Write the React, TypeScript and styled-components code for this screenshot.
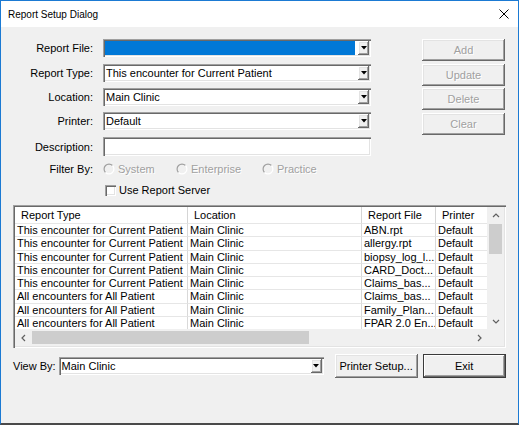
import styled, { createGlobalStyle } from "styled-components";

const ROWS = [
  ["This encounter for Current Patient", "Main Clinic", "ABN.rpt", "Default"],
  ["This encounter for Current Patient", "Main Clinic", "allergy.rpt", "Default"],
  ["This encounter for Current Patient", "Main Clinic", "biopsy_log_l...", "Default"],
  ["This encounter for Current Patient", "Main Clinic", "CARD_Doct...", "Default"],
  ["This encounter for Current Patient", "Main Clinic", "Claims_bas...", "Default"],
  ["All encounters for All Patient", "Main Clinic", "Claims_bas...", "Default"],
  ["All encounters for All Patient", "Main Clinic", "Family_Plan...", "Default"],
  ["All encounters for All Patient", "Main Clinic", "FPAR 2.0 En...", "Default"],
];

const COLUMNS = ["Report Type", "Location", "Report File", "Printer"];

const DropArrow = () => (
  <svg width="6" height="4" viewBox="0 0 6 4">
    <polygon points="0,0 6,0 3,3.5" fill="#000" />
  </svg>
);

const Chevron = ({ dir }: { dir: "up" | "down" | "left" | "right" }) => {
  const points = {
    up: "1,5 4,2 7,5",
    down: "1,3 4,6 7,3",
    left: "5,1 2,4 5,7",
    right: "3,1 6,4 3,7",
  }[dir];
  return (
    <svg width="8" height="8" viewBox="0 0 8 8">
      <polyline points={points} fill="none" stroke="#606060" strokeWidth="1.2" />
    </svg>
  );
};

const Radio = () => (
  <svg width="12" height="12" viewBox="0 0 12 12">
    <circle cx="6" cy="6" r="4.9" fill="#f0f0f0" />
    <path d="M9.5 2.5 A4.95 4.95 0 0 0 2.5 9.5" fill="none" stroke="#a0a0a0" strokeWidth="1.2" />
    <path d="M2.5 9.5 A4.95 4.95 0 0 0 9.5 2.5" fill="none" stroke="#ffffff" strokeWidth="1.2" />
  </svg>
);

const Combo = ({ value, selected, width }: { value?: string; selected?: boolean; width?: number }) => (
  <Field $w={width}>
    <ComboValue $selected={selected}>{value}</ComboValue>
    <DropButton>
      <DropArrow />
    </DropButton>
  </Field>
);

const App = () => {
  return (
    <Window>
      <GlobalStyle />
      <TitleBar>
        <Title>Report Setup Dialog</Title>
        <CloseBox>
          <svg width="10" height="10" viewBox="0 0 10 10">
            <path d="M0.5 0.5 L9.5 9.5 M9.5 0.5 L0.5 9.5" stroke="#000" strokeWidth="1" />
          </svg>
        </CloseBox>
      </TitleBar>

      <Body>
        <TopArea>
          <Form>
            <FormRow $h={25}>
              <Label>Report File:</Label>
              <Combo selected />
            </FormRow>
            <FormRow $h={24}>
              <Label>Report Type:</Label>
              <Combo value="This encounter for Current Patient" />
            </FormRow>
            <FormRow $h={24}>
              <Label>Location:</Label>
              <Combo value="Main Clinic" />
            </FormRow>
            <FormRow $h={25}>
              <Label>Printer:</Label>
              <Combo value="Default" />
            </FormRow>
            <FormRow $h={23}>
              <Label $h={19}>Description:</Label>
              <TextInput />
            </FormRow>
            <FormRow $h={20}>
              <Label>Filter By:</Label>
              <Options>
                <Option $w={73}>
                  <Radio />
                  System
                </Option>
                <Option $w={86}>
                  <Radio />
                  Enterprise
                </Option>
                <Option>
                  <Radio />
                  Practice
                </Option>
              </Options>
            </FormRow>
            <FormRow $h={21}>
              <Label />
              <CheckLine>
                <CheckBox />
                Use Report Server
              </CheckLine>
            </FormRow>
          </Form>

          <ButtonColumn>
            <DialogButton disabled>Add</DialogButton>
            <DialogButton disabled>Update</DialogButton>
            <DialogButton disabled>Delete</DialogButton>
            <DialogButton disabled>Clear</DialogButton>
          </ButtonColumn>
        </TopArea>

        <ListFrame>
          <ListViewport>
            <HeaderRow>
              {COLUMNS.map((c) => (
                <HeaderCell key={c}>{c}</HeaderCell>
              ))}
            </HeaderRow>
            {ROWS.map((row, i) => (
              <DataRow key={i}>
                {row.map((cell, j) => (
                  <DataCell key={j}>{cell}</DataCell>
                ))}
              </DataRow>
            ))}
          </ListViewport>

          <VScroll>
            <ScrollArrow>
              <Chevron dir="up" />
            </ScrollArrow>
            <VThumb />
            <ScrollTrack />
            <ScrollArrow>
              <Chevron dir="down" />
            </ScrollArrow>
          </VScroll>

          <HScroll>
            <ScrollArrow>
              <Chevron dir="left" />
            </ScrollArrow>
            <HThumb />
            <ScrollTrack />
            <ScrollArrow>
              <Chevron dir="right" />
            </ScrollArrow>
          </HScroll>
          <Corner />
        </ListFrame>

        <BottomBar>
          <BottomLabel>View By:</BottomLabel>
          <Combo value="Main Clinic" width={265} />
          <DialogButton $h={24} $gap={11}>
            Printer Setup...
          </DialogButton>
          <DialogButton $h={24} $gap={5} $default>
            Exit
          </DialogButton>
        </BottomBar>
      </Body>
    </Window>
  );
};

export default App;

const GlobalStyle = createGlobalStyle`
  html, body {
    margin: 0;
    padding: 0;
    background: #ffffff;
  }
  body {
    font-family: "Liberation Sans", Arial, sans-serif;
    font-size: 11px;
    color: #000;
  }
`;

const Window = styled.div`
  width: 519px;
  height: 425px;
  box-sizing: border-box;
  border: 1px solid #1b7ad3;
  border-bottom: 2px solid #4a4a4a;
  display: flex;
  flex-direction: column;
  background: #f0f0f0;
`;

const TitleBar = styled.div`
  height: 26px;
  flex-shrink: 0;
  background: #ffffff;
  display: flex;
  align-items: center;
  justify-content: space-between;
  padding-left: 7px;
`;

const Title = styled.span`
  font-size: 10px;
  color: #000;
`;

const CloseBox = styled.div`
  width: 28px;
  height: 26px;
  display: flex;
  align-items: center;
  justify-content: center;
`;

const Body = styled.div`
  flex: 1;
  display: flex;
  flex-direction: column;
  padding: 12px 12px 0 12px;
`;

const TopArea = styled.div`
  display: flex;
  justify-content: space-between;
  align-items: flex-start;
`;

const Form = styled.div`
  display: flex;
  flex-direction: column;
`;

const FormRow = styled.div<{ $h: number }>`
  height: ${(p) => p.$h}px;
  display: flex;
  align-items: flex-start;
  gap: 10px;
`;

const Label = styled.div<{ $h?: number }>`
  width: 80px;
  height: ${(p) => p.$h ?? 18}px;
  display: flex;
  align-items: center;
  justify-content: flex-end;
  white-space: nowrap;
`;

const sunken = `
  box-shadow: inset 1px 1px #a0a0a0, inset 2px 2px #696969,
    inset -1px -1px #ffffff, inset -2px -2px #e3e3e3;
`;

const raised = `
  box-shadow: inset -1px -1px #696969, inset 1px 1px #ffffff,
    inset -2px -2px #a0a0a0, inset 2px 2px #e3e3e3;
`;

const Field = styled.div<{ $w?: number }>`
  width: ${(p) => p.$w ?? 268}px;
  height: 18px;
  box-sizing: border-box;
  padding: 2px;
  background: #ffffff;
  display: flex;
  ${sunken}
`;

const ComboValue = styled.div<{ $selected?: boolean }>`
  flex: 1;
  margin-right: 3px;
  padding-left: 1px;
  background: ${(p) => (p.$selected ? "#0078d7" : "transparent")};
  display: flex;
  align-items: center;
  white-space: nowrap;
  overflow: hidden;
`;

const DropButton = styled.div`
  width: 11px;
  background: #f0f0f0;
  display: flex;
  align-items: center;
  justify-content: center;
  ${raised}
`;

const TextInput = styled.div`
  width: 268px;
  height: 19px;
  box-sizing: border-box;
  background: #ffffff;
  ${sunken}
`;

const Options = styled.div`
  height: 18px;
  display: flex;
  align-items: center;
`;

const Option = styled.div<{ $w?: number }>`
  width: ${(p) => (p.$w ? `${p.$w}px` : "auto")};
  display: flex;
  align-items: center;
  gap: 3px;
  color: #a0a0a0;
  text-shadow: 1px 1px #ffffff;
`;

const CheckLine = styled.div`
  height: 20px;
  display: flex;
  align-items: center;
  gap: 3px;
  padding-left: 2px;
`;

const CheckBox = styled.div`
  width: 11px;
  height: 11px;
  box-sizing: border-box;
  background: #ffffff;
  ${sunken}
`;

const ButtonColumn = styled.div`
  display: flex;
  flex-direction: column;
  gap: 2.7px;
  margin-right: 1px;
`;

const DialogButton = styled.button<{ $h?: number; $gap?: number; $default?: boolean }>`
  width: 83px;
  height: ${(p) => p.$h ?? 22}px;
  margin-left: ${(p) => p.$gap ?? 0}px;
  box-sizing: border-box;
  border: none;
  padding: 0;
  background: #f0f0f0;
  font-family: "Liberation Sans", Arial, sans-serif;
  font-size: 11px;
  color: #000;
  ${(p) =>
    p.$default
      ? `box-shadow: inset 0 0 0 1px #3a3a3a, inset -2px -2px #696969, inset 2px 2px #ffffff, inset -3px -3px #a0a0a0;`
      : raised}

  &:disabled {
    color: #a0a0a0;
    text-shadow: 1px 1px #ffffff;
  }
`;

const ListFrame = styled.div`
  margin-top: 4px;
  height: 143px;
  box-sizing: border-box;
  padding: 2px;
  background: #ffffff;
  display: grid;
  grid-template-columns: 1fr 17px;
  grid-template-rows: 1fr 17px;
  ${sunken}
`;

const ListViewport = styled.div`
  overflow: hidden;
  background: #ffffff;
`;

const columns = `
  display: grid;
  grid-template-columns: 173px 174px 74px 80px;
`;

const HeaderRow = styled.div`
  ${columns}
  height: 16px;
`;

const HeaderCell = styled.div`
  padding-left: 6px;
  border-right: 1px solid #d5d5d5;
  display: flex;
  align-items: center;
  white-space: nowrap;
  overflow: hidden;
`;

const DataRow = styled.div`
  ${columns}
  height: 13.25px;
`;

const DataCell = styled.div`
  padding-left: 2px;
  border-right: 1px solid #d9d9d9;
  border-top: 1px solid #e6e6e6;
  box-sizing: border-box;
  display: flex;
  align-items: center;
  line-height: 12px;
  white-space: nowrap;
  overflow: hidden;
`;

const VScroll = styled.div`
  background: #f0f0f0;
  display: flex;
  flex-direction: column;
  align-items: center;
`;

const HScroll = styled.div`
  background: #f0f0f0;
  display: flex;
  align-items: center;
`;

const ScrollArrow = styled.div`
  width: 17px;
  height: 17px;
  flex-shrink: 0;
  display: flex;
  align-items: center;
  justify-content: center;
`;

const ScrollTrack = styled.div`
  flex: 1;
`;

const VThumb = styled.div`
  width: 13px;
  height: 30px;
  background: #cdcdcd;
`;

const HThumb = styled.div`
  width: 277px;
  height: 13px;
  background: #cdcdcd;
`;

const Corner = styled.div`
  background: #f0f0f0;
`;

const BottomBar = styled.div`
  margin-top: 6px;
  display: flex;
  align-items: center;
`;

const BottomLabel = styled.div`
  margin-right: 3px;
  white-space: nowrap;
`;
